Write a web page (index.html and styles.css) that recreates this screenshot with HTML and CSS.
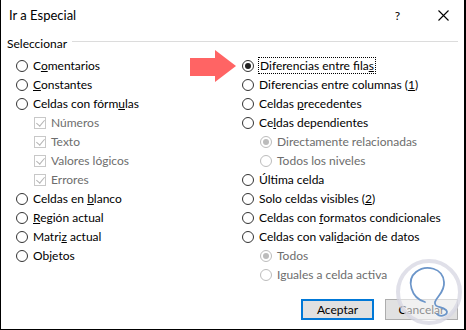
FILE: index.html
```html
<!DOCTYPE html>
<html lang="es">
<head>
    <meta charset="UTF-8">
    <title>Ir a Especial</title>
    <link rel="stylesheet" href="styles.css">
</head>
<body>
    <div class="dialog">
        <div class="titlebar">
            <span class="title">Ir a Especial</span>
            <span class="help">?</span>
            <svg class="close" width="11" height="11" viewBox="0 0 11 11">
                <path d="M0.5 0.5 L10.5 10.5 M10.5 0.5 L0.5 10.5" stroke="#000" stroke-width="1.1" fill="none"/>
            </svg>
        </div>

        <div class="legend">
            <span>Seleccionar</span>
            <div class="legend-line"></div>
        </div>

        <div class="columns">
            <div class="col col-left">
                <div class="opt"><span class="radio"></span><span>C<u>o</u>mentarios</span></div>
                <div class="opt"><span class="radio"></span><span><u>C</u>onstantes</span></div>
                <div class="opt"><span class="radio"></span><span>Celdas con fórm<u>u</u>las</span></div>
                <div class="opt sub disabled"><span class="check"></span><span>Números</span></div>
                <div class="opt sub disabled"><span class="check"></span><span>Texto</span></div>
                <div class="opt sub disabled"><span class="check"></span><span>Valores lógicos</span></div>
                <div class="opt sub disabled"><span class="check"></span><span>Errores</span></div>
                <div class="opt"><span class="radio"></span><span>Celdas en <u>b</u>lanco</span></div>
                <div class="opt"><span class="radio"></span><span><u>R</u>egión actual</span></div>
                <div class="opt"><span class="radio"></span><span>Matri<u>z</u> actual</span></div>
                <div class="opt"><span class="radio"></span><span>Ob<u>j</u>etos</span></div>
            </div>
            <div class="col col-right">
                <div class="opt"><span class="radio checked"></span><span class="focus">Diferencias entre fila<u>s</u></span></div>
                <div class="opt"><span class="radio"></span><span>Diferencias entre columnas (<u>1</u>)</span></div>
                <div class="opt"><span class="radio"></span><span>Celdas <u>p</u>recedentes</span></div>
                <div class="opt"><span class="radio"></span><span>Ce<u>l</u>das dependientes</span></div>
                <div class="opt sub disabled"><span class="radio checked"></span><span>Directamente relacionadas</span></div>
                <div class="opt sub disabled"><span class="radio"></span><span>Todos los niveles</span></div>
                <div class="opt"><span class="radio"></span><span>Últ<u>i</u>ma celda</span></div>
                <div class="opt"><span class="radio"></span><span>Solo celdas visibles (<u>2</u>)</span></div>
                <div class="opt"><span class="radio"></span><span>Celdas con <u>f</u>ormatos condicionales</span></div>
                <div class="opt"><span class="radio"></span><span>Celdas con vali<u>d</u>ación de datos</span></div>
                <div class="opt sub disabled"><span class="radio checked"></span><span>Todos</span></div>
                <div class="opt sub disabled"><span class="radio"></span><span>Iguales a celda activa</span></div>
            </div>
        </div>

        <div class="buttons">
            <button class="btn btn-default">Aceptar</button>
            <button class="btn">Cancelar</button>
        </div>

        <!-- pointer arrow drawn over the dialog -->
        <svg class="arrow" width="48" height="34" viewBox="0 0 48 34">
            <polygon points="0,8 25,8 25,0 46,16 25,32 25,26 0,26" fill="#ff6464"/>
        </svg>

        <!-- watermark -->
        <svg class="watermark" width="72" height="72" viewBox="0 0 72 72">
            <circle cx="36" cy="36" r="31" fill="rgba(255,255,255,0.55)" stroke="rgba(214,214,226,0.75)" stroke-width="4"/>
            <path d="M32 46 C18 42, 13 24, 23 16 C33 8, 50 12, 51 26 C52 36, 44 40, 42 46 C41 52, 48 50, 53 54 C57 58, 48 62, 44 58"
                  fill="none" stroke="#6b95c9" stroke-width="1.8" stroke-linecap="round"/>
        </svg>
    </div>
</body>
</html>
```

FILE: styles.css
```css
* {
    margin: 0;
    padding: 0;
    box-sizing: border-box;
}
body {
    font-family: 'Lato', 'Liberation Sans', sans-serif;
    font-size: 12px;
    color: #000;
    background: #fff;
}
.dialog {
    position: relative;
    width: 466px;
    height: 330px;
    border-left: 1px solid #000;
    border-right: 2px solid #000;
    border-bottom: 1px solid #000;
    background: #fff;
}
.titlebar {
    display: flex;
    align-items: center;
    height: 30px;
    padding-left: 8px;
}
.titlebar .title {
    flex: 1;
    font-size: 13px;
}
.titlebar .help {
    margin-right: 38px;
}
.titlebar .close {
    margin-right: 15px;
}
.legend {
    display: flex;
    align-items: center;
    height: 26px;
    padding: 0 6px 0 6px;
}
.legend-line {
    flex: 1;
    height: 1px;
    margin-left: 5px;
    margin-top: -3px;
    background: #dcdcdc;
}
.columns {
    display: grid;
    grid-template-columns: 226px 1fr;
    padding-left: 15px;
}
.opt {
    display: flex;
    align-items: center;
    height: 19px;
    gap: 5px;
    white-space: nowrap;
}
.opt.sub {
    padding-left: 18px;
}
.opt.disabled {
    color: #6d6d6d;
}
.radio {
    position: relative;
    width: 12px;
    height: 12px;
    border: 1px solid #333;
    border-radius: 50%;
    background: #fff;
    flex-shrink: 0;
}
.radio.checked::after {
    content: "";
    position: absolute;
    left: 2px;
    top: 2px;
    width: 6px;
    height: 6px;
    border-radius: 50%;
    background: #222;
}
.disabled .radio {
    border-color: #bcbcbc;
}
.disabled .radio.checked::after {
    background: #bcbcbc;
}
.check {
    position: relative;
    width: 12px;
    height: 12px;
    border: 1px solid #c8c8c8;
    flex-shrink: 0;
}
.check::after {
    content: "";
    position: absolute;
    left: 3px;
    top: 0;
    width: 4px;
    height: 7px;
    border-right: 1px solid #b4b4b4;
    border-bottom: 1px solid #b4b4b4;
    transform: rotate(40deg);
}
.focus {
    outline: 1px dotted #000;
    padding: 0 1px;
}
.buttons {
    display: flex;
    justify-content: flex-end;
    gap: 11px;
    margin-top: 15px;
    padding-right: 6px;
}
.btn {
    width: 73px;
    height: 21px;
    font-family: inherit;
    font-size: 12px;
    background: #e1e1e1;
    border: 1px solid #adadad;
    color: #000;
}
.btn-default {
    border: 2px solid #0078d7;
}
.arrow {
    position: absolute;
    left: 189px;
    top: 50px;
}
.watermark {
    position: absolute;
    left: 392px;
    top: 256px;
}
```
